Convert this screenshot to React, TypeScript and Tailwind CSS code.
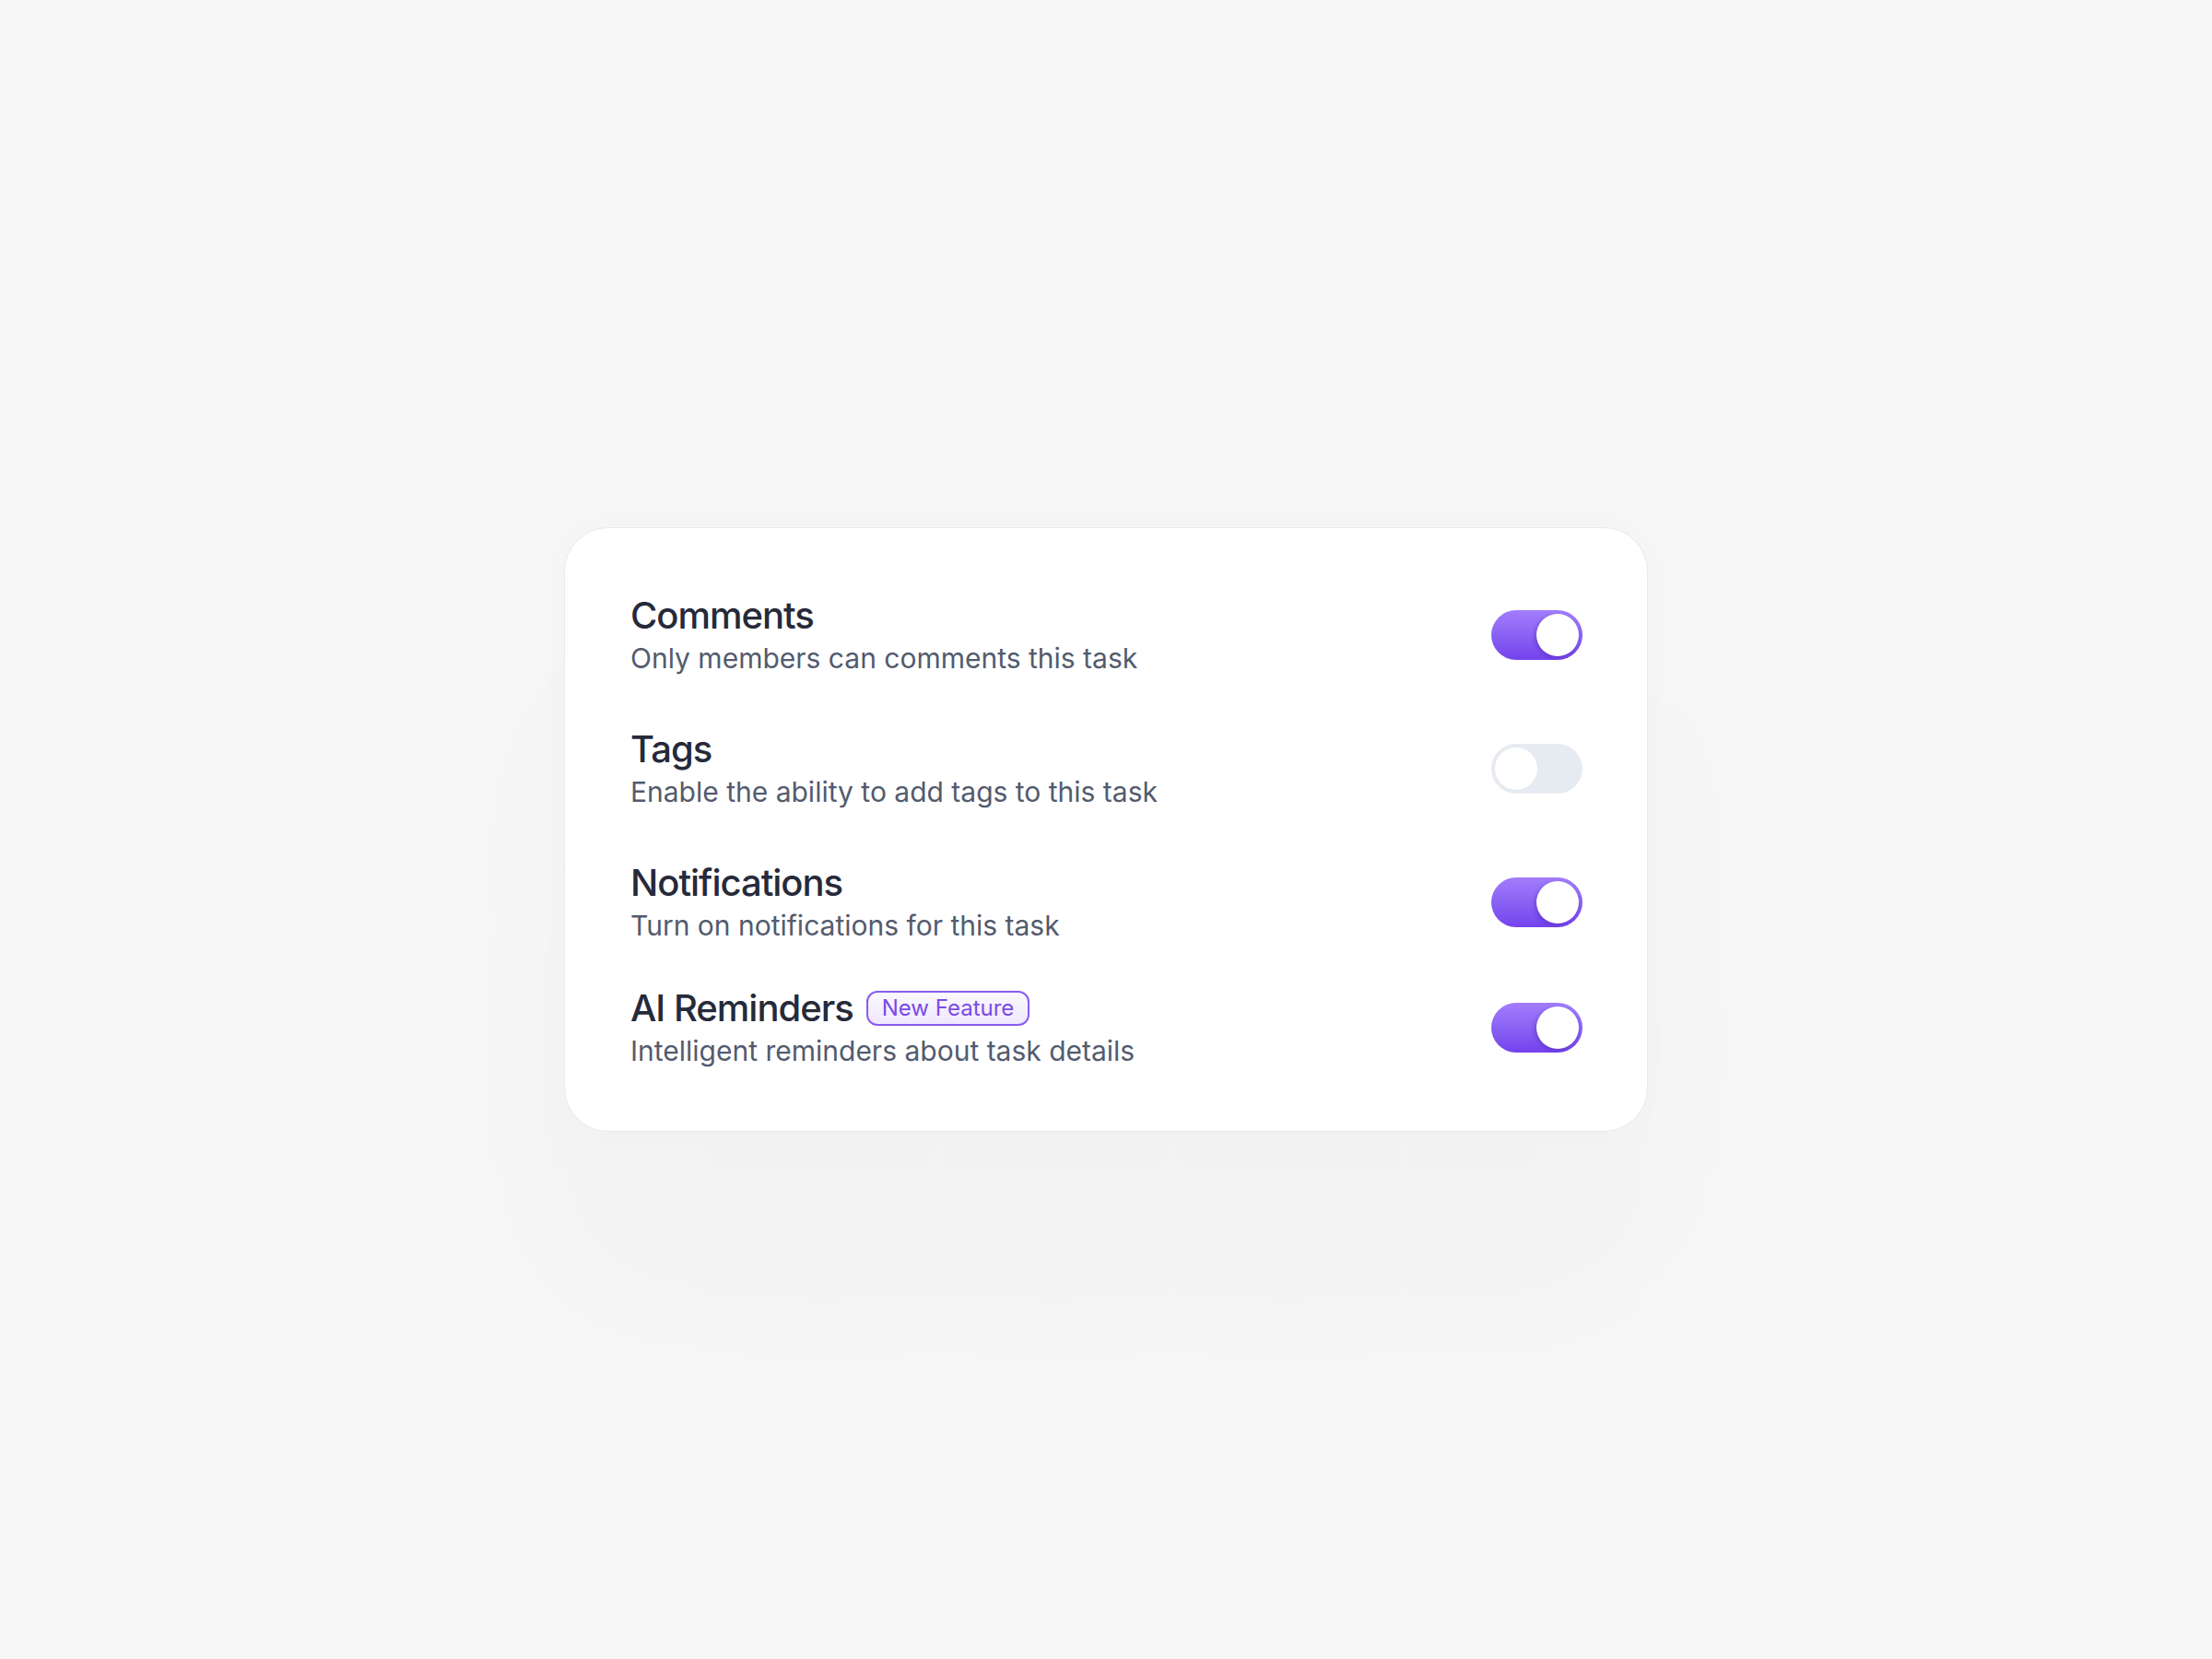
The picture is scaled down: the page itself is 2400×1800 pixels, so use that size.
import React from "react";

type Row = { title: string; desc: string; on: boolean; badge?: string; mt: string };

const rows: Row[] = [
  { title: "Comments", desc: "Only members can comments this task", on: true, mt: "mt-0" },
  { title: "Tags", desc: "Enable the ability to add tags to this task", on: false, mt: "mt-[55px]" },
  { title: "Notifications", desc: "Turn on notifications for this task", on: true, mt: "mt-[55px]" },
  { title: "AI Reminders", desc: "Intelligent reminders about task details", on: true, badge: "New Feature", mt: "mt-[46px]" },
];

function Toggle({ on }: { on: boolean }) {
  if (on) {
    return (
      <div className="flex h-[54px] w-[99px] shrink-0 items-center justify-end rounded-full bg-gradient-to-b from-[#a27dfb] to-[#7442ec] p-[4px]">
        <div className="h-[46px] w-[46px] rounded-full bg-white shadow-[-2px_2px_4px_rgba(70,30,160,0.35)]" />
      </div>
    );
  }
  return (
    <div className="flex h-[54px] w-[99px] shrink-0 items-center justify-start rounded-full bg-[#e6eaf1] p-[4px]">
      <div className="h-[46px] w-[46px] rounded-full bg-white" />
    </div>
  );
}

export default function App() {
  return (
    <div
      className="flex min-h-screen w-full items-center justify-center bg-[#f6f6f6]"
      style={{ fontFamily: "Inter, 'Noto Sans', sans-serif" }}
    >
      <div className="w-[1176px] rounded-[48px] border border-[#e8e9ee] bg-white pt-[71px] pb-[67px] pl-[71px] pr-[70px] shadow-[0_160px_200px_rgba(0,0,0,0.018),0_0_40px_rgba(0,0,0,0.015)]">
        {rows.map((r) => (
          <div key={r.title} className={`flex items-center justify-between ${r.mt}`}>
            <div className="flex flex-col">
              <div className="flex items-center gap-[14px]">
                <span className="text-[40px] leading-[48px] font-medium tracking-[-1px] text-[#262a3a]">
                  {r.title}
                </span>
                {r.badge && (
                  <span className="flex h-[38px] items-center rounded-[12px] border-2 border-[#8a5cf0] bg-gradient-to-b from-[#fbf9ff] to-[#efe8fd] px-[15px] text-[24px] leading-none font-normal text-[#7a4be6]">
                    {r.badge}
                  </span>
                )}
              </div>
              <span className="mt-[2px] text-[30px] leading-[40px] font-normal text-[#535b6e]">{r.desc}</span>
            </div>
            <Toggle on={r.on} />
          </div>
        ))}
      </div>
    </div>
  );
}
